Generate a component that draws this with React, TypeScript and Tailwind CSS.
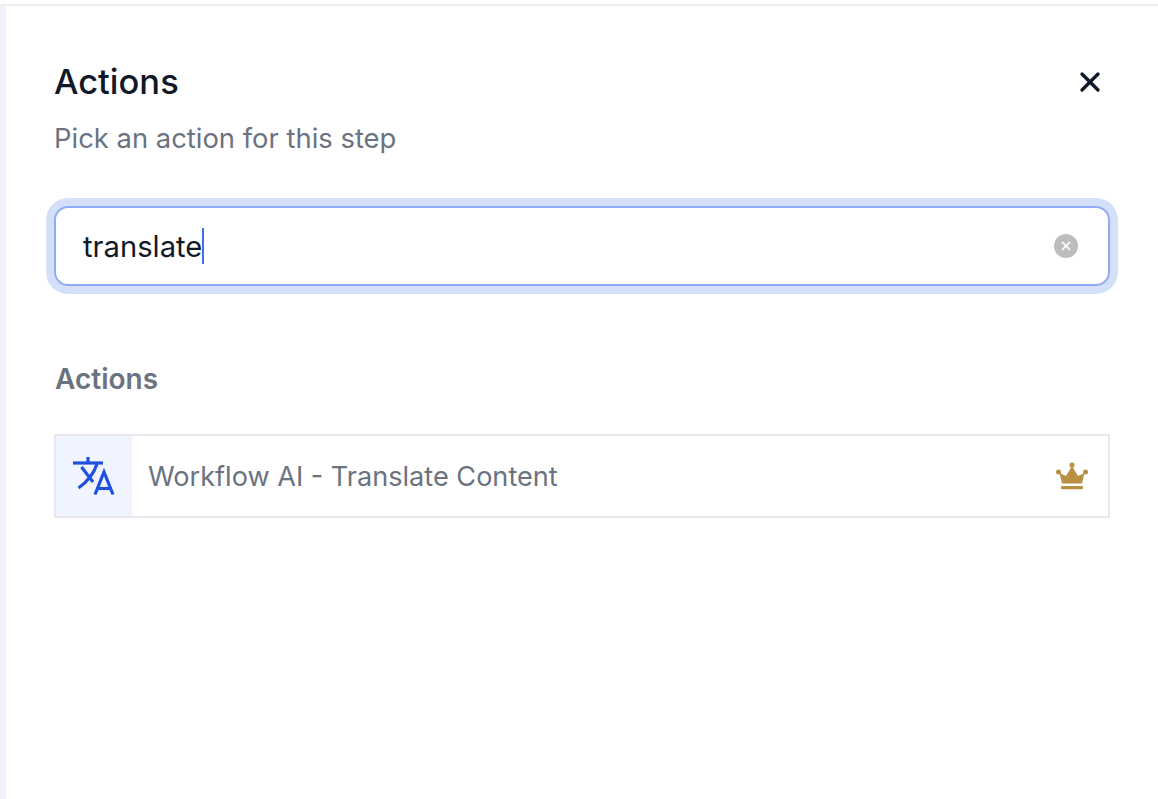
import { X } from "lucide-react";

function TranslateIcon() {
  return (
    <svg width="44" height="42" viewBox="0 0 44 42" fill="none" stroke="#1f50e0" strokeWidth="3.200">
      <path d="M1 8h30" />
      <path d="M16 2v6" />
      <path d="M9.500 12 21 27" />
      <path d="M25 9C22 18 15 27 6.500 33" />
      <path d="M23 39.500 32 17l9 22.500" />
      <path d="M26 33.500h12" />
    </svg>
  );
}

function CrownIcon() {
  return (
    <svg width="32" height="28" viewBox="0 0 32 28" fill="#b98f43">
      <circle cx="2.500" cy="10" r="2.500" />
      <circle cx="16" cy="3" r="2.500" />
      <circle cx="29.500" cy="10" r="2.500" />
      <path d="M3.500 11 10 14 16 4l6 10 6.500-3L26 21.500H6z" />
      <rect x="5" y="24" width="22" height="3.200" rx="1" />
    </svg>
  );
}

export default function App() {
  return (
    <div className="flex h-screen flex-col overflow-hidden bg-white pt-1 font-['Inter',sans-serif]">
      <div className="flex flex-1 border-t-2 border-[#eceef2]">
        <div className="w-[6px] bg-[#f3f4f9]" />
        <main className="flex-1 pl-[48px] pr-[48px]">
          <header className="mt-[54px] flex items-center justify-between">
            <h1 className="text-[34.500px] leading-[44px] font-medium text-[#111827]">Actions</h1>
            <button type="button" className="mr-[4px] text-[#111827]">
              <X size={32} strokeWidth={2.5} />
            </button>
          </header>
          <p className="mt-[16px] text-[27.400px] leading-[36px] text-[#6b7280]">Pick an action for this step</p>

          <div className="mt-[50px] flex h-[80px] items-center justify-between rounded-[14px] border-2 border-[#8fabf5] pl-[27px] pr-[30px] ring-8 ring-[#d4dffa]">
            <div className="flex items-center text-[29.200px] text-[#111827]">
              <span className="pt-[2px]">translate</span>
              <span className="h-[36px] w-[2px] bg-[#3f6ff0]" />
            </div>
            <span className="flex h-6 w-6 items-center justify-center rounded-full bg-[#bdbdbd] text-white">
              <X size={14} strokeWidth={3} />
            </span>
          </div>

          <h2 className="mt-[75px] ml-px text-[28px] leading-[36px] font-semibold text-[#6b7280]">Actions</h2>

          <div className="mt-[37px] flex h-[84px] items-center border-2 border-[#e5e7eb]">
            <div className="flex h-full w-[76px] items-center justify-center bg-[#eff4ff]">
              <TranslateIcon />
            </div>
            <span className="ml-[16px] flex-1 pt-[2px] text-[27.100px] text-[#6b7280]">Workflow AI - Translate Content</span>
            <span className="mr-[20px]">
              <CrownIcon />
            </span>
          </div>
        </main>
      </div>
    </div>
  );
}
